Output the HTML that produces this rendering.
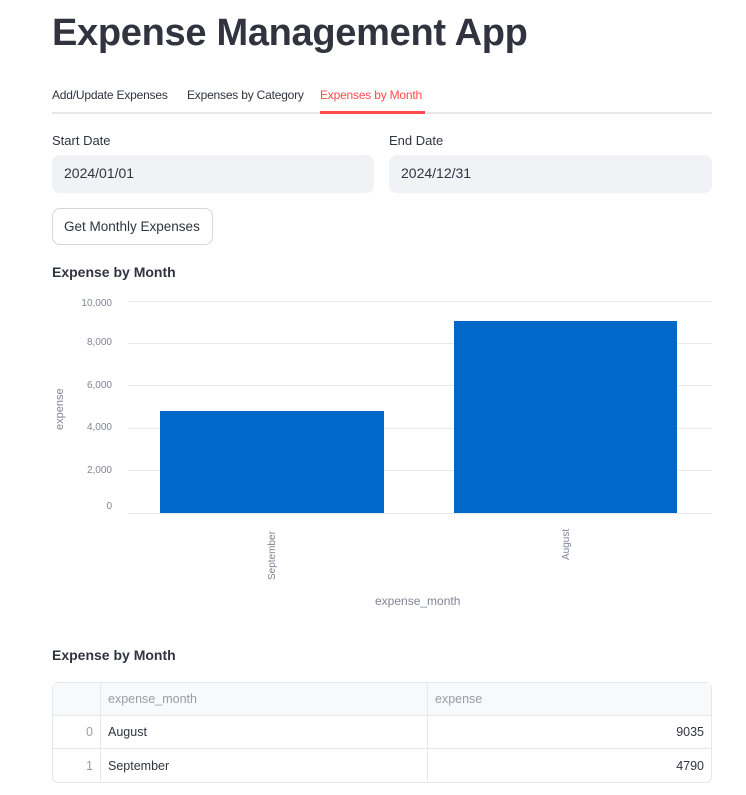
<!DOCTYPE html>
<html><head><meta charset="utf-8"><style>
*{margin:0;padding:0;box-sizing:border-box}
body{width:746px;height:795px;background:#fff;font-family:"Liberation Sans",sans-serif;color:#31333f;position:relative;overflow:hidden}
.a{position:absolute;white-space:nowrap}
h1{position:absolute;left:52px;top:12px;font-size:38px;font-weight:700;letter-spacing:-0.3px;color:#31333f}
.tab{font-size:12px;top:88px;letter-spacing:-0.2px}
.lbl{font-size:13px}
.inp{position:absolute;height:38px;background:#f0f2f6;border-radius:8px;font-size:14px;padding:10px 12px}
.ax{font-size:10px;color:#808495;text-align:right;width:60px}
.grid{position:absolute;left:128px;width:584px;height:1px;background:#e8e9ed}
table{position:absolute;left:52px;top:682px;width:660px;border-collapse:separate;border-spacing:0;border:1px solid #e6e7eb;border-radius:6px;font-size:12.5px}
td{height:33px;border-bottom:1px solid #e6e7eb;border-right:1px solid #e6e7eb;padding:0 7px}
tr:last-child td{border-bottom:none}
td:last-child{border-right:none}
th{height:33px;font-weight:400;color:#9a9ca6;text-align:left;padding:0 7px;background:#f8f9fb;border-bottom:1px solid #e6e7eb;border-right:1px solid #e6e7eb}
th:last-child{border-right:none}
</style></head><body>
<h1>Expense Management App</h1>
<div class="a tab" style="left:52px">Add/Update Expenses</div>
<div class="a tab" style="left:187px">Expenses by Category</div>
<div class="a tab" style="left:320px;color:#ff4b4b">Expenses by Month</div>
<div class="a" style="left:52px;top:112px;width:660px;height:2px;background:#e6e7eb"></div>
<div class="a" style="left:320px;top:111px;width:105px;height:3px;background:#ff4b4b"></div>
<div class="a lbl" style="left:52px;top:133px">Start Date</div>
<div class="a lbl" style="left:389px;top:133px">End Date</div>
<div class="inp" style="left:52px;top:155px;width:322px">2024/01/01</div>
<div class="inp" style="left:389px;top:155px;width:323px">2024/12/31</div>
<div class="a" style="left:52px;top:208px;width:161px;height:37px;border:1px solid #d5d6db;border-radius:8px;font-size:13.5px;padding:10px 11px">Get Monthly Expenses</div>
<div class="a" style="left:52px;top:264px;font-size:14px;font-weight:700">Expense by Month</div>
<div class="grid" style="top:301px"></div>
<div class="grid" style="top:343px"></div>
<div class="grid" style="top:385px"></div>
<div class="grid" style="top:428px"></div>
<div class="grid" style="top:470px"></div>
<div class="grid" style="top:513px"></div>
<div class="a ax" style="left:52px;top:298px">10,000</div>
<div class="a ax" style="left:52px;top:337px">8,000</div>
<div class="a ax" style="left:52px;top:380px">6,000</div>
<div class="a ax" style="left:52px;top:422px">4,000</div>
<div class="a ax" style="left:52px;top:465px">2,000</div>
<div class="a ax" style="left:52px;top:501px">0</div>
<div class="a" style="left:160px;top:411px;width:224px;height:102px;background:#0068c9"></div>
<div class="a" style="left:454px;top:321px;width:223px;height:192px;background:#0068c9"></div>
<div class="a" style="font-size:11px;color:#808495;transform:rotate(-90deg);transform-origin:left top;left:54px;top:430px">expense</div>
<div class="a" style="font-size:10px;color:#808495;transform:rotate(-90deg);transform-origin:left top;left:267px;top:580px">September</div>
<div class="a" style="font-size:10px;color:#808495;transform:rotate(-90deg);transform-origin:left top;left:561px;top:560px">August</div>
<div class="a" style="left:375px;top:594px;font-size:12px;color:#808495">expense_month</div>
<div class="a" style="left:52px;top:647px;font-size:14px;font-weight:700">Expense by Month</div>
<table>
<tr><th style="width:48px"></th><th style="width:327px">expense_month</th><th>expense</th></tr>
<tr><td style="text-align:right;color:#9a9ca6">0</td><td>August</td><td style="text-align:right">9035</td></tr>
<tr><td style="text-align:right;color:#9a9ca6">1</td><td>September</td><td style="text-align:right">4790</td></tr>
</table>
</body></html>
